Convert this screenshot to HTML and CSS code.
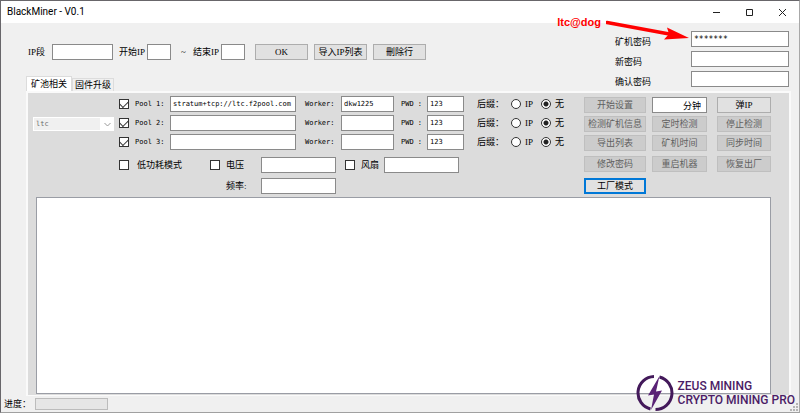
FILE: index.html
```html
<!DOCTYPE html>
<html lang="zh-CN">
<head>
<meta charset="utf-8">
<title>BlackMiner - V0.1</title>
<link rel="stylesheet" href="styles.css">
</head>
<body>
<div class="window">
  <header class="titlebar">
    <h1 class="title">BlackMiner - V0.1</h1>
    <div class="window-buttons">
      <button class="window-button" aria-label="Minimize"><svg width="9" height="9" viewBox="0 0 9 9"><path d="M1 4.500h7"/></svg></button>
      <button class="window-button" aria-label="Maximize"><svg width="9" height="9" viewBox="0 0 9 9"><path d="M1.500 1.500h6v6h-6z"/></svg></button>
      <button class="window-button" aria-label="Close"><svg width="9" height="9" viewBox="0 0 9 9"><path d="M1 1l7 7M8 1L1 8"/></svg></button>
    </div>
  </header>

  <section class="top">
    <div class="top-left">
      <form class="range">
        <label for="seg">IP段</label><input class="field seg" id="seg" type="text">
        <label for="from">开始IP</label><input class="field octet" id="from" type="text">
        <span class="tilde">~</span>
        <label for="to">结束IP</label><input class="field octet" id="to" type="text">
        <div class="range-buttons">
          <button class="button" type="button">OK</button>
          <button class="button" type="button">导入IP列表</button>
          <button class="button" type="button">刪除行</button>
        </div>
      </form>
      <div class="tabs" role="tablist">
        <button class="tab active" role="tab" aria-selected="true">矿池相关</button>
        <button class="tab" role="tab" aria-selected="false">固件升级</button>
      </div>
    </div>
    <form class="passwords">
      <label for="pw">矿机密码</label><input class="field mono stars" id="pw" type="text" value="*******">
      <label for="pw-new">新密码</label><input class="field" id="pw-new" type="text">
      <label for="pw-again">确认密码</label><input class="field" id="pw-again" type="text">
    </form>
  </section>

  <main class="panel">
    <div class="controls">
      <div class="coin-box">
        <select class="coin mono" aria-label="Coin" disabled><option>ltc</option></select>
        <svg class="coin-arrow" width="7" height="5" viewBox="0 0 7 5"><path d="M0.500 1l3 3 3-3"/></svg>
      </div>
      <div class="settings">
        <div class="pool">
          <input class="check" id="p1" type="checkbox" checked><label class="mono" for="p1">Pool 1:</label>
          <input class="field url mono" type="text" aria-label="Pool 1" value="stratum+tcp://ltc.f2pool.com">
          <label class="mono" for="w1">Worker:</label><input class="field worker mono" id="w1" type="text" value="dkw1225">
          <label class="mono" for="k1">PWD :</label><input class="field pwd mono" id="k1" type="text" value="123">
          <span>后缀：</span>
          <label class="choice"><input class="radio" type="radio" name="s1">IP</label>
          <label class="choice"><input class="radio" type="radio" name="s1" checked>无</label>
        </div>
        <div class="pool">
          <input class="check" id="p2" type="checkbox" checked><label class="mono" for="p2">Pool 2:</label>
          <input class="field url mono" type="text" aria-label="Pool 2">
          <label class="mono" for="w2">Worker:</label><input class="field worker mono" id="w2" type="text">
          <label class="mono" for="k2">PWD :</label><input class="field pwd mono" id="k2" type="text" value="123">
          <span>后缀：</span>
          <label class="choice"><input class="radio" type="radio" name="s2">IP</label>
          <label class="choice"><input class="radio" type="radio" name="s2" checked>无</label>
        </div>
        <div class="pool">
          <input class="check" id="p3" type="checkbox" checked><label class="mono" for="p3">Pool 3:</label>
          <input class="field url mono" type="text" aria-label="Pool 3">
          <label class="mono" for="w3">Worker:</label><input class="field worker mono" id="w3" type="text">
          <label class="mono" for="k3">PWD :</label><input class="field pwd mono" id="k3" type="text" value="123">
          <span>后缀：</span>
          <label class="choice"><input class="radio" type="radio" name="s3">IP</label>
          <label class="choice"><input class="radio" type="radio" name="s3" checked>无</label>
        </div>
        <div class="tuning">
          <input class="check" id="low" type="checkbox"><label for="low">低功耗模式</label>
          <input class="check" id="volt" type="checkbox"><label for="volt">电压</label>
          <input class="field" type="text" aria-label="电压">
          <input class="check" id="fan" type="checkbox"><label for="fan">风扇</label>
          <input class="field" type="text" aria-label="风扇">
          <label class="freq-label" for="freq">频率:</label><input class="field" id="freq" type="text">
        </div>
      </div>
      <div class="actions">
        <div class="action-column wide">
          <button class="button" disabled>开始设置</button>
          <button class="button" disabled>检测矿机信息</button>
          <button class="button" disabled>导出列表</button>
          <button class="button spaced" disabled>修改密码</button>
          <button class="button focused spaced">工厂模式</button>
        </div>
        <div class="action-column middle">
          <input class="field minutes" type="text" aria-label="定时" value="分钟">
          <button class="button" disabled>定时检测</button>
          <button class="button" disabled>矿机时间</button>
          <button class="button spaced" disabled>重启机器</button>
        </div>
        <div class="action-column">
          <button class="button">弹IP</button>
          <button class="button" disabled>停止检测</button>
          <button class="button" disabled>同步时间</button>
          <button class="button spaced" disabled>恢复出厂</button>
        </div>
      </div>
    </div>
    <div class="list"></div>
  </main>

  <footer class="status">
    <span>进度：</span>
    <div class="progress" role="progressbar" aria-label="进度"></div>
    <svg class="grip" width="8" height="8" viewBox="0 0 8 8"><path d="M6 0h2v2h-2zM3 3h2v2h-2zM6 3h2v2h-2zM0 6h2v2h-2zM3 6h2v2h-2zM6 6h2v2h-2z"/></svg>
  </footer>

  <div class="note">
    <span>ltc@dog</span>
    <svg width="84" height="24" viewBox="0 0 84 24"><path d="M1 3.500L66 15.500" fill="none" stroke="#f00" stroke-width="3.500" stroke-linecap="round"/><path d="M83 19L58 20.500L63 15L61 8.500Z" fill="#f00"/></svg>
  </div>

  <div class="brand">
    <svg width="38" height="38" viewBox="0 0 38 38">
      <path d="M18 2.500A16.500 16.500 0 0 0 14.500 35M23.500 3A16.500 16.500 0 0 1 19.500 35.500" fill="none" stroke="#43195a" stroke-width="3"/>
      <path d="M23.500 2L12 21.500L18 20.500L15 36L26 16.500L20 17.500Z" fill="#5a2276"/>
    </svg>
    <div class="brand-text"><div>ZEUS MINING</div><div>CRYPTO MINING PRO</div></div>
  </div>
</div>
</body>
</html>
```

FILE: styles.css
```css
* { box-sizing: border-box; }
body { margin: 0; }
.window, button, input, select {
  font-family: "Liberation Serif", "Noto Sans CJK SC", serif;
  font-size: 9px;
  line-height: 11px;
  color: #000;
}
.window {
  position: relative;
  min-height: 100vh;
  display: flex;
  flex-direction: column;
  background: #f0f0f0;
  border: 1px solid #68666a;
  border-right-color: #a8a8a8;
  border-bottom-color: #a0a0a0;
  white-space: nowrap;
}
.titlebar {
  display: flex;
  justify-content: space-between;
  align-items: center;
  height: 22px;
  padding: 0 12px 0 6px;
  background: #fff;
}
.title {
  margin: 0;
  font: 400 10px/12px Roboto, sans-serif;
}
.window-buttons { display: flex; gap: 24px; }
.window-button {
  display: flex;
  padding: 0;
  border: 0;
  background: none;
}
.window-button svg { fill: none; stroke: #222; stroke-width: 1; }

.top { display: flex; justify-content: space-between; height: 68px; }
.top-left { display: flex; flex-direction: column; justify-content: space-between; }
.range { display: flex; align-items: center; padding: 21px 0 0 27px; }
.field {
  height: 16px;
  min-width: 0;
  margin: 0;
  padding: 0 2px;
  border: 1px solid #8a8a8a;
  border-radius: 0;
  background: #fff;
}
.mono { font-family: "DejaVu Sans Mono", monospace; font-size: 7px; }
.seg { width: 61px; margin: 0 6px 0 7px; }
.octet { width: 24px; margin-left: 2px; }
.tilde { margin: 0 7px 0 10px; }
.range-buttons { display: flex; gap: 6px; margin-left: 10px; }
.range-buttons .button { width: 53px; }
.button {
  display: flex;
  align-items: center;
  justify-content: center;
  height: 16px;
  padding: 0;
  border: 1px solid #adadad;
  border-radius: 0;
  background: #e1e1e1;
}
.button:disabled { background: #ccc; border-color: #bfbfbf; color: #5f5f5f; }
.focused { border: 2px solid #0078d7; }
.passwords {
  display: grid;
  grid-template-columns: 76px 98px;
  grid-auto-rows: 16px;
  row-gap: 4px;
  align-items: center;
  padding: 8px 10px 0 0;
}
.passwords label { padding-top: 7px; }
.stars { font-size: 8px; }

.tabs { display: flex; align-items: flex-end; padding-left: 25px; }
.tab {
  height: 13px;
  padding: 0 2px;
  border: 1px solid #dcdcdc;
  border-bottom: 0;
  background: #f0f0f0;
}
.tab.active { height: 15px; padding: 0 4px; background: #fff; }

.panel {
  flex: 1;
  display: flex;
  flex-direction: column;
  margin: 0 8px 0 25px;
  padding-bottom: 1px;
  border: 2px solid #fafafa;
  border-bottom-width: 1px;
  background: #dcdcdc;
}
.controls { display: flex; padding: 3px 18px 3px 5px; }
.coin-box { position: relative; width: 81px; height: 14px; margin: 21px 5px 0 0; }
.coin {
  appearance: none;
  display: block;
  width: 100%;
  height: 14px;
  padding: 0 2px;
  border: 1px solid #fff;
  border-right-width: 14px;
  border-radius: 0;
  background: #f0f0f0;
  color: #6d6d6d;
  opacity: 1;
}
.coin-arrow {
  position: absolute;
  right: 3px;
  top: 5px;
  fill: none;
  stroke: #999;
  pointer-events: none;
}
.pool {
  display: grid;
  grid-template-columns: 16px 35px 135px 36px 60px 26px 50px 34px 30px auto;
  align-items: center;
  height: 16px;
  margin-bottom: 3px;
}
.url { width: 126px; }
.worker { width: 53px; }
.pwd { width: 37px; }
.choice { display: flex; align-items: center; gap: 4px; }
.check, .radio {
  appearance: none;
  width: 10px;
  height: 10px;
  margin: 0;
  border: 1px solid #333;
  background: #fff;
}
.check { display: grid; place-items: center; }
.check:checked::before {
  content: "";
  width: 7px;
  height: 4px;
  border: solid #333;
  border-width: 0 0 1px 1px;
  transform: translateY(-1px) rotate(-45deg);
}
.radio { border-radius: 50%; }
.radio:checked { background: radial-gradient(circle, #222 0 2px, #fff 3px); }
.tuning {
  display: grid;
  grid-template-columns: 18px 73px 16px 35px 84px 16px 23px 75px;
  grid-auto-rows: 16px;
  row-gap: 5px;
  align-items: center;
  margin-top: 7px;
}
.tuning .field { width: 75px; }
.freq-label { grid-column-start: 4; }

.actions { display: flex; gap: 6px; margin-left: auto; }
.action-column {
  display: grid;
  grid-auto-rows: 16px;
  row-gap: 3px;
  align-content: start;
  width: 54px;
  padding-top: 1px;
}
.action-column.wide { width: 62px; }
.action-column.middle { width: 55px; margin-right: 4px; }
.spaced { margin-top: 2px; margin-bottom: -2px; }
.spaced + .spaced { margin-top: 5px; margin-bottom: -5px; }
.minutes { width: 100%; padding-right: 5px; text-align: right; }

.list {
  flex: 1;
  margin: 0 18px 0 8px;
  border: 1px solid #9a9da5;
  background: #fff;
}
.status {
  display: flex;
  align-items: center;
  height: 16px;
  padding-left: 3px;
}
.progress {
  width: 73px;
  height: 12px;
  margin-left: 4px;
  border: 1px solid #bcbcbc;
  background: #e6e6e6;
}
.grip { margin: 6px 1px 0 auto; fill: #b4b4b4; }

.note {
  position: absolute;
  top: 14px;
  right: 109px;
  display: flex;
  gap: 5px;
  color: #f00;
  font: 700 11px/14px "Liberation Sans", sans-serif;
}
.note svg { margin-top: 4px; }
.brand {
  position: absolute;
  right: 4px;
  bottom: 0;
  display: flex;
  align-items: center;
  gap: 4px;
  color: #4b1c66;
  font: 500 12px/14px Roboto, sans-serif;
}
```
